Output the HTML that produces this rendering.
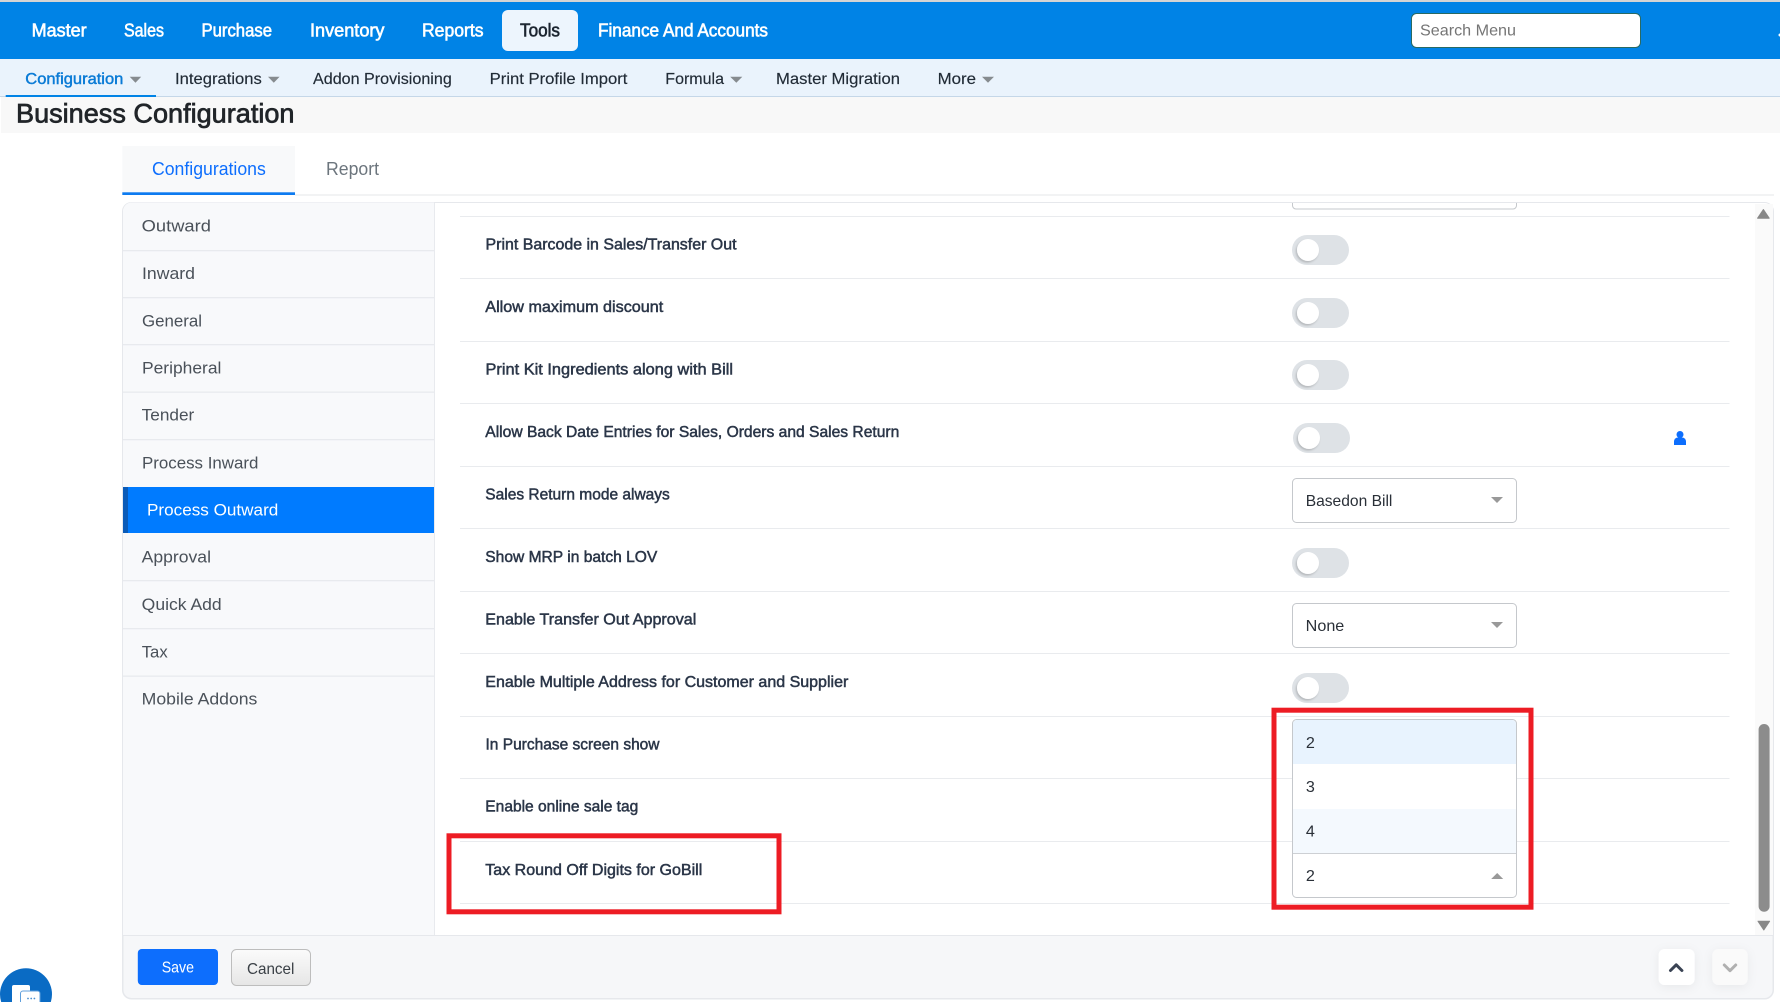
<!DOCTYPE html>
<html lang="en">
<head>
<meta charset="utf-8">
<title>Business Configuration</title>
<style>
html,body{margin:0;padding:0;background:#fff;width:1780px;height:1002px;overflow:hidden}
svg{display:block}
text{font-family:"Liberation Sans",sans-serif}
.nav{font-size:18px;fill:#fff;stroke:#fff;stroke-width:.6px}
.sub{font-size:16px;fill:#212b36;stroke:#212b36;stroke-width:.15px}
.side{font-size:17px;fill:#4a5159}
.lab{font-size:16px;fill:#2b3648;stroke:#2b3648;stroke-width:.5px}
.val{font-size:16px;fill:#2a3038}
</style>
</head>
<body>
<svg width="1780" height="1002" viewBox="0 0 1780 1002" xmlns="http://www.w3.org/2000/svg">
<defs>
<linearGradient id="cg" x1="0" y1="0" x2="0" y2="1"><stop offset="0" stop-color="#fbfbfb"/><stop offset="1" stop-color="#e6e6e6"/></linearGradient>
<filter id="ks" x="-40%" y="-40%" width="180%" height="180%"><feDropShadow dx="-1" dy="1.5" stdDeviation="1" flood-color="#000" flood-opacity=".2"/></filter>
<filter id="bs" x="-50%" y="-50%" width="200%" height="200%"><feDropShadow dx="0" dy="2" stdDeviation="5" flood-color="#000" flood-opacity=".06"/></filter>
</defs>

<rect width="1780" height="1002" fill="#fff"/>

<!-- top bar -->
<rect width="1780" height="2" fill="#d4d4d4"/>
<rect y="2" width="1780" height="57" fill="#0083e6"/>
<rect x="502" y="10" width="76" height="41" rx="6" fill="#edf5fd"/>
<text class="nav" x="31.6" y="36.7" textLength="55" lengthAdjust="spacingAndGlyphs">Master</text>
<text class="nav" x="124" y="36.7" textLength="40" lengthAdjust="spacingAndGlyphs">Sales</text>
<text class="nav" x="201.5" y="36.7" textLength="70.5" lengthAdjust="spacingAndGlyphs">Purchase</text>
<text class="nav" x="310" y="36.7" textLength="74.5" lengthAdjust="spacingAndGlyphs">Inventory</text>
<text class="nav" x="422" y="36.7" textLength="61.5" lengthAdjust="spacingAndGlyphs">Reports</text>
<text class="nav" x="520" y="36.7" textLength="40" lengthAdjust="spacingAndGlyphs" style="fill:#1c2530;stroke:#1c2530">Tools</text>
<text class="nav" x="598" y="36.7" textLength="170" lengthAdjust="spacingAndGlyphs">Finance And Accounts</text>
<rect x="1411.5" y="13.5" width="229" height="34" rx="5" fill="#fff" stroke="#2a6a62"/>
<text x="1420" y="35.7" font-size="16" fill="#757575" textLength="96" lengthAdjust="spacingAndGlyphs">Search Menu</text>
<circle cx="1780" cy="35" r="1.5" fill="#fff"/>

<!-- sub nav -->
<rect y="59" width="1780" height="37" fill="#eaf3fc"/>
<rect y="96" width="1780" height="1" fill="#c5d7e8"/>
<rect x="5.7" y="95" width="150.3" height="2" fill="#0083e6"/>
<text class="sub" x="25.3" y="84" textLength="98" lengthAdjust="spacingAndGlyphs" style="fill:#0a7bd6;stroke:#0a7bd6;stroke-width:.45px">Configuration</text>
<path d="M129.7 76.7h11.5l-5.75 6z" fill="#868b8f"/>
<text class="sub" x="175" y="84" textLength="86.8" lengthAdjust="spacingAndGlyphs">Integrations</text>
<path d="M268 76.7h11.6l-5.8 6z" fill="#868b8f"/>
<text class="sub" x="313" y="84" textLength="138.8" lengthAdjust="spacingAndGlyphs">Addon Provisioning</text>
<text class="sub" x="489.7" y="84" textLength="137.7" lengthAdjust="spacingAndGlyphs">Print Profile Import</text>
<text class="sub" x="665.3" y="84" textLength="58.7" lengthAdjust="spacingAndGlyphs">Formula</text>
<path d="M730.2 76.7h12.1l-6 6z" fill="#868b8f"/>
<text class="sub" x="776" y="84" textLength="124" lengthAdjust="spacingAndGlyphs">Master Migration</text>
<text class="sub" x="937.6" y="84" textLength="38.4" lengthAdjust="spacingAndGlyphs">More</text>
<path d="M982 76.7h12l-6 6z" fill="#868b8f"/>

<!-- title -->
<rect x="1" y="97" width="1779" height="36" fill="#f8f8f8"/>
<text x="16" y="122.7" font-size="27" fill="#212529" stroke="#212529" stroke-width=".7" textLength="278.5" lengthAdjust="spacingAndGlyphs">Business Configuration</text>

<!-- tabs -->
<rect x="122.3" y="146" width="172.7" height="49" fill="#f8f9fa"/>
<rect x="122.3" y="192.3" width="172.7" height="2.7" fill="#0d7bf0"/>
<rect x="295" y="194.5" width="1479" height="1" fill="#e6e7e9"/>
<text x="152" y="175" font-size="18" fill="#0d6efd" textLength="113.8" lengthAdjust="spacingAndGlyphs">Configurations</text>
<text x="326" y="175" font-size="18" fill="#6c757d" textLength="53" lengthAdjust="spacingAndGlyphs">Report</text>

<!-- card -->
<rect x="122.5" y="202.5" width="1651" height="796.5" rx="9" fill="#fff" stroke="#e6e8ec"/>
<path d="M123 935V211.5a9 9 0 0 1 9-9H434V935z" fill="#f8f9fb"/>
<rect x="434" y="203" width="1" height="732" fill="#e8eaee"/>
<path d="M123 935.5H1773V990a8.500 8.500 0 0 1-8.500 8.500H131.500a8.500 8.500 0 0 1-8.500-8.500z" fill="#f6f7f9" stroke="#e6e8ec"/>

<!-- sidebar -->
<g fill="#e8eaee">
<rect x="123" y="250" width="311" height="1.300"/>
<rect x="123" y="297" width="311" height="1.300"/>
<rect x="123" y="344" width="311" height="1.300"/>
<rect x="123" y="391.500" width="311" height="1.300"/>
<rect x="123" y="439" width="311" height="1.300"/>
<rect x="123" y="580" width="311" height="1.300"/>
<rect x="123" y="628" width="311" height="1.300"/>
<rect x="123" y="675.500" width="311" height="1.300"/>
</g>
<text class="side" x="141.700" y="231.700" textLength="69.200" lengthAdjust="spacingAndGlyphs">Outward</text>
<text class="side" x="142" y="279.200" textLength="53" lengthAdjust="spacingAndGlyphs">Inward</text>
<text class="side" x="142" y="326.400" textLength="60" lengthAdjust="spacingAndGlyphs">General</text>
<text class="side" x="142" y="373.400" textLength="79.400" lengthAdjust="spacingAndGlyphs">Peripheral</text>
<text class="side" x="141.700" y="420.400" textLength="52.600" lengthAdjust="spacingAndGlyphs">Tender</text>
<text class="side" x="142" y="468.500" textLength="116.400" lengthAdjust="spacingAndGlyphs">Process Inward</text>
<rect x="123" y="487" width="311" height="46" fill="#007bff"/>
<rect x="123" y="487" width="5" height="46" fill="#0a5bb8"/>
<text class="side" x="147" y="515.500" textLength="131.300" lengthAdjust="spacingAndGlyphs" style="fill:#fff">Process Outward</text>
<text class="side" x="141.700" y="562.700" textLength="69.300" lengthAdjust="spacingAndGlyphs">Approval</text>
<text class="side" x="141.700" y="610" textLength="80" lengthAdjust="spacingAndGlyphs">Quick Add</text>
<text class="side" x="141.700" y="657.500" textLength="26" lengthAdjust="spacingAndGlyphs">Tax</text>
<text class="side" x="141.700" y="704.500" textLength="115.700" lengthAdjust="spacingAndGlyphs">Mobile Addons</text>

<!-- partial top select -->
<path d="M1292.500 203v2.500a3.500 3.500 0 0 0 3.500 3.500h217a3.500 3.500 0 0 0 3.500-3.500V203" fill="#fff" stroke="#c5c8cc"/>

<!-- row separators -->
<g fill="#e9ebee">
<rect x="460" y="216" width="1269.500" height="1"/>
<rect x="460" y="278" width="1269.500" height="1"/>
<rect x="460" y="341" width="1269.500" height="1"/>
<rect x="460" y="403" width="1269.500" height="1"/>
<rect x="460" y="466" width="1269.500" height="1"/>
<rect x="460" y="528" width="1269.500" height="1"/>
<rect x="460" y="591" width="1269.500" height="1"/>
<rect x="460" y="653" width="1269.500" height="1"/>
<rect x="460" y="716" width="1269.500" height="1"/>
<rect x="460" y="778" width="1269.500" height="1"/>
<rect x="460" y="841" width="1269.500" height="1"/>
<rect x="460" y="903" width="1269.500" height="1"/>
</g>

<!-- labels -->
<text class="lab" x="485.500" y="249.700" textLength="251" lengthAdjust="spacingAndGlyphs">Print Barcode in Sales/Transfer Out</text>
<text class="lab" x="485.300" y="312" textLength="178" lengthAdjust="spacingAndGlyphs">Allow maximum discount</text>
<text class="lab" x="485.500" y="374.700" textLength="247.500" lengthAdjust="spacingAndGlyphs">Print Kit Ingredients along with Bill</text>
<text class="lab" x="485.300" y="437" textLength="414" lengthAdjust="spacingAndGlyphs">Allow Back Date Entries for Sales, Orders and Sales Return</text>
<text class="lab" x="485.300" y="499.700" textLength="184.500" lengthAdjust="spacingAndGlyphs">Sales Return mode always</text>
<text class="lab" x="485.300" y="562" textLength="172" lengthAdjust="spacingAndGlyphs">Show MRP in batch LOV</text>
<text class="lab" x="485.300" y="624.700" textLength="211" lengthAdjust="spacingAndGlyphs">Enable Transfer Out Approval</text>
<text class="lab" x="485.300" y="687" textLength="363" lengthAdjust="spacingAndGlyphs">Enable Multiple Address for Customer and Supplier</text>
<text class="lab" x="485.500" y="749.700" textLength="174" lengthAdjust="spacingAndGlyphs">In Purchase screen show</text>
<text class="lab" x="485.300" y="811.700" textLength="153" lengthAdjust="spacingAndGlyphs">Enable online sale tag</text>
<text class="lab" x="485.300" y="875" textLength="217" lengthAdjust="spacingAndGlyphs">Tax Round Off Digits for GoBill</text>

<!-- toggles -->
<g>
<rect x="1292" y="235" width="57" height="30" rx="15" fill="#dee2e6"/><circle cx="1308" cy="250" r="11" fill="#fff" filter="url(#ks)"/>
<rect x="1292" y="298" width="57" height="30" rx="15" fill="#dee2e6"/><circle cx="1308" cy="313" r="11" fill="#fff" filter="url(#ks)"/>
<rect x="1292" y="360" width="57" height="30" rx="15" fill="#dee2e6"/><circle cx="1308" cy="375" r="11" fill="#fff" filter="url(#ks)"/>
<rect x="1293" y="423" width="57" height="30" rx="15" fill="#dee2e6"/><circle cx="1309" cy="438" r="11" fill="#fff" filter="url(#ks)"/>
<rect x="1292" y="548" width="57" height="30" rx="15" fill="#dee2e6"/><circle cx="1308" cy="563" r="11" fill="#fff" filter="url(#ks)"/>
<rect x="1292" y="673" width="57" height="30" rx="15" fill="#dee2e6"/><circle cx="1308" cy="688" r="11" fill="#fff" filter="url(#ks)"/>
</g>

<!-- person icon -->
<circle cx="1680" cy="434.500" r="3.500" fill="#0d6efd"/>
<path d="M1674 445v-3.500a4 4 0 0 1 4-4h4a4 4 0 0 1 4 4v3.500z" fill="#0d6efd"/>

<!-- selects -->
<rect x="1292.500" y="478.500" width="224" height="44" rx="4" fill="#fff" stroke="#c5c8cc"/>
<text class="val" x="1305.700" y="506" textLength="86.700" lengthAdjust="spacingAndGlyphs">Basedon Bill</text>
<path d="M1491 497h12l-6 6z" fill="#999"/>
<rect x="1292.500" y="603.500" width="224" height="44" rx="4" fill="#fff" stroke="#c5c8cc"/>
<text class="val" x="1305.700" y="631" textLength="38.600" lengthAdjust="spacingAndGlyphs">None</text>
<path d="M1491 622h12l-6 6z" fill="#999"/>

<!-- open dropdown -->
<rect x="1292.500" y="719.500" width="224" height="178" rx="4" fill="#fff" stroke="#c5c8cc"/>
<path d="M1293 724a4 4 0 0 1 4-4h215a4 4 0 0 1 4 4v40H1293z" fill="#e8f3fe"/>
<rect x="1293" y="809" width="223" height="44" fill="#f4f9fe"/>
<rect x="1293" y="853" width="223" height="1" fill="#cdd0d4"/>
<text class="val" x="1305.900" y="748" textLength="9" lengthAdjust="spacingAndGlyphs">2</text>
<text class="val" x="1305.900" y="792" textLength="9" lengthAdjust="spacingAndGlyphs">3</text>
<text class="val" x="1305.900" y="836.700" textLength="9" lengthAdjust="spacingAndGlyphs">4</text>
<text class="val" x="1305.900" y="881" textLength="9" lengthAdjust="spacingAndGlyphs">2</text>
<path d="M1491.200 879h12l-6-6z" fill="#999"/>

<!-- red annotation boxes -->
<rect x="1274" y="710.200" width="257" height="197" fill="none" stroke="#ed1c24" stroke-width="5"/>
<rect x="449" y="835.800" width="330" height="76" fill="none" stroke="#ed1c24" stroke-width="5"/>

<!-- scrollbar -->
<rect x="1755" y="204" width="18" height="731" fill="#fafafa"/>
<path d="M1763.400 209.500l5.800 8.700h-11.600z" fill="#888" stroke="#888" stroke-width="1" stroke-linejoin="round"/>
<rect x="1758.600" y="724" width="11" height="187.700" rx="5.500" fill="#8c8c8c"/>
<path d="M1763.800 930l-5.800-8.800h11.600z" fill="#888" stroke="#888" stroke-width="1" stroke-linejoin="round"/>

<!-- footer buttons -->
<rect x="137.800" y="949" width="80.200" height="36" rx="4" fill="#0d6efd"/>
<text x="161.700" y="972.700" font-size="16" fill="#fff" textLength="32.300" lengthAdjust="spacingAndGlyphs">Save</text>
<rect x="231.500" y="949.500" width="79" height="36" rx="5" fill="url(#cg)" stroke="#bdbdbd"/>
<text x="247" y="974" font-size="16" fill="#3a4046" textLength="47.400" lengthAdjust="spacingAndGlyphs">Cancel</text>

<rect x="1658.600" y="949" width="36" height="36" rx="6" fill="#fff" filter="url(#bs)"/>
<path d="M1670.500 970.500l5.700-5.700 5.700 5.700" fill="none" stroke="#3a4354" stroke-width="3" stroke-linecap="round" stroke-linejoin="round"/>
<rect x="1712.400" y="949" width="35.200" height="36" rx="6" fill="#fafafa" filter="url(#bs)"/>
<path d="M1724.300 965l5.700 5.700 5.700-5.700" fill="none" stroke="#b0b0b0" stroke-width="3" stroke-linecap="round" stroke-linejoin="round"/>

<!-- chat bubble -->
<circle cx="26" cy="994.300" r="26" fill="#0a6bc4"/>
<rect x="12" y="985" width="18" height="20" rx="2" fill="#fff"/>
<rect x="20.500" y="991" width="19.500" height="16" rx="2.500" fill="#fff" stroke="#5f9fdc"/>
<g fill="#4a8fd0"><circle cx="28" cy="998.500" r=".9"/><circle cx="31.200" cy="998.500" r=".9"/><circle cx="34.400" cy="998.500" r=".9"/></g>
</svg>
</body>
</html>
